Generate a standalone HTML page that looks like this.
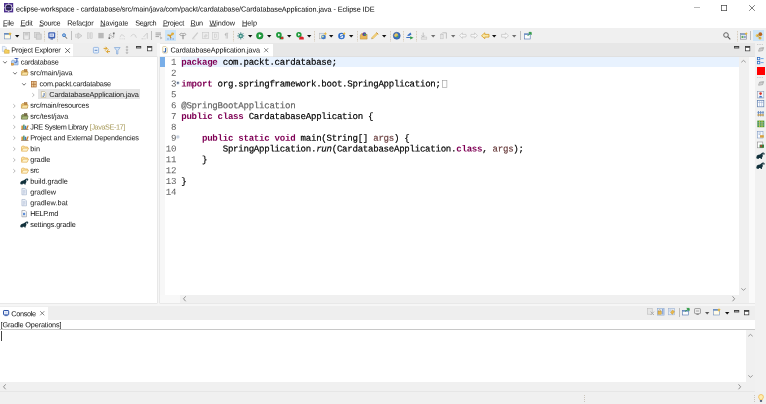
<!DOCTYPE html>
<html lang="en"><head><meta charset="utf-8"><title>eclipse-workspace - Eclipse IDE</title>
<style>html,body{margin:0;padding:0}body{width:766px;height:404px;position:relative;overflow:hidden;background:#fff;font-family:"Liberation Sans", sans-serif;-webkit-font-smoothing:antialiased}svg{overflow:visible}</style></head>
<body>
<div style="position:absolute;left:0px;top:0px;width:766px;height:28px;background:#fff;"></div>
<div style="position:absolute;left:0px;top:28px;width:766px;height:14.5px;background:#f0f0f0;"></div>
<div style="position:absolute;left:0px;top:42.5px;width:766px;height:362px;background:#f6f6f6;"></div>
<div style="position:absolute;left:0px;top:43px;width:156.5px;height:13.5px;background:#eeeeee;"></div>
<div style="position:absolute;left:0px;top:43.5px;width:72.5px;height:13.5px;background:#fff;"></div>
<div style="position:absolute;left:0px;top:56.5px;width:156.5px;height:246.5px;background:#fff;box-shadow:0 0 0 0.5px #d9d9d9"></div>
<div style="position:absolute;left:159.5px;top:43px;width:595.5px;height:13.5px;background:#e7e7e7;"></div>
<div style="position:absolute;left:159.5px;top:43.5px;width:113.5px;height:13.5px;background:#fff;"></div>
<div style="position:absolute;left:159.5px;top:56.5px;width:595.5px;height:246.5px;background:#fff;box-shadow:0 0 0 0.5px #d9d9d9"></div>
<div style="position:absolute;left:159.5px;top:56.5px;width:5.3px;height:238.5px;background:#f7f7f7;"></div>
<div style="position:absolute;left:181px;top:56.5px;width:557.5px;height:10.7px;background:#e8f2fe;"></div>
<div style="position:absolute;left:159.5px;top:56.5px;width:5.3px;height:10.7px;background:#78aee8;"></div>
<div style="position:absolute;left:738.5px;top:56.5px;width:10px;height:246.5px;background:#f0f0f0;"></div>
<div style="position:absolute;left:748.5px;top:56.5px;width:6.5px;height:246.5px;background:#fafafa;"></div>
<div style="position:absolute;left:179.7px;top:295px;width:559px;height:8px;background:#f0f0f0;"></div>
<div style="position:absolute;left:159.5px;top:295px;width:20.2px;height:8px;background:#f8f8f8;"></div>
<div style="position:absolute;left:755px;top:42.5px;width:11px;height:349px;background:#f1f1f1;"></div>
<div style="position:absolute;left:0px;top:305.7px;width:755px;height:0.7px;background:#e6e6e6;"></div>
<div style="position:absolute;left:0px;top:306.3px;width:755px;height:13.3px;background:#eeeeee;"></div>
<div style="position:absolute;left:0px;top:306.5px;width:48.3px;height:13.3px;background:#fff;"></div>
<div style="position:absolute;left:0px;top:319.6px;width:755px;height:71.4px;background:#fff;"></div>
<div style="position:absolute;left:0px;top:329px;width:755px;height:0.8px;background:#c8c8c8;"></div>
<div style="position:absolute;left:745.5px;top:329.5px;width:9.5px;height:52px;background:#f0f0f0;"></div>
<div style="position:absolute;left:0px;top:381.5px;width:755px;height:9.5px;background:#f0f0f0;"></div>
<div style="position:absolute;left:0px;top:391px;width:766px;height:13px;background:#f0f0f0;"></div>
<div style="position:absolute;left:0px;top:391px;width:755px;height:0.7px;background:#e6e6e6;"></div>
<svg style="position:absolute;left:3.9px;top:3.4px;" width="9.2" height="9.4" viewBox="0 0 9.2 9.4"><rect x="0" y="0" width="9.2" height="9.4" fill="#4b2e8c"/><rect x="-0.7" y="-4.2" width="1.4" height="1.2" fill="#ddd6ee" transform="translate(4.6,4.7) rotate(0)"/><rect x="-0.7" y="-4.2" width="1.4" height="1.2" fill="#ddd6ee" transform="translate(4.6,4.7) rotate(45)"/><rect x="-0.7" y="-4.2" width="1.4" height="1.2" fill="#ddd6ee" transform="translate(4.6,4.7) rotate(90)"/><rect x="-0.7" y="-4.2" width="1.4" height="1.2" fill="#ddd6ee" transform="translate(4.6,4.7) rotate(135)"/><rect x="-0.7" y="-4.2" width="1.4" height="1.2" fill="#ddd6ee" transform="translate(4.6,4.7) rotate(180)"/><rect x="-0.7" y="-4.2" width="1.4" height="1.2" fill="#ddd6ee" transform="translate(4.6,4.7) rotate(225)"/><rect x="-0.7" y="-4.2" width="1.4" height="1.2" fill="#ddd6ee" transform="translate(4.6,4.7) rotate(270)"/><rect x="-0.7" y="-4.2" width="1.4" height="1.2" fill="#ddd6ee" transform="translate(4.6,4.7) rotate(315)"/><circle cx="4.6" cy="4.7" r="3.5" fill="#e6e0f2"/><circle cx="4.6" cy="4.7" r="2.9" fill="#2b2250"/><rect x="2.6" y="4.3" width="4" height="0.8" fill="#6a58b0"/></svg>
<svg style="position:absolute;left:693.8px;top:7.4px;" width="6" height="1" viewBox="0 0 6 1"><rect width="6" height="0.7" fill="#9a9a9a"/></svg>
<svg style="position:absolute;left:721px;top:5.3px;" width="6" height="6" viewBox="0 0 6 6"><rect x="0.35" y="0.35" width="5.3" height="5.3" fill="none" stroke="#444" stroke-width="0.7"/></svg>
<svg style="position:absolute;left:749px;top:5.3px;" width="6" height="6" viewBox="0 0 6 6"><path d="M0.2 0.2L5.8 5.8M5.8 0.2L0.2 5.8" stroke="#444" stroke-width="0.7" fill="none"/></svg>
<svg style="position:absolute;left:4px;top:32.15px;" width="7.5" height="7.5" viewBox="0 0 7.5 7.5"><rect x="0.4" y="1.3" width="6" height="5.6" fill="#fffbe8" stroke="#6f8fc0" stroke-width="0.6"/><rect x="0.4" y="1.3" width="6" height="1.3" fill="#4a78b8"/><path d="M6 0l.6 1.2 1.2.3-1 .8.2 1.2L6 2.9l-1 .6.2-1.2-1-.8 1.2-.3z" fill="#e8b83a"/></svg>
<svg style="position:absolute;left:14.8px;top:35.0px;" width="4.4" height="2.4" viewBox="0 0 4.4 2.4"><path d="M0 0H4.4L2.2 2.4Z" fill="#111"/></svg>
<svg style="position:absolute;left:23px;top:32.15px;" width="7" height="7.5" viewBox="0 0 7 7.5"><rect x="0.4" y="0.4" width="6.2" height="6.7" fill="#dcdcdc" stroke="#bdbdbd" stroke-width="0.8"/><rect x="1.8" y="0.4" width="3.4" height="2.4" fill="#c9c9c9"/><rect x="1.6" y="4.2" width="3.8" height="2.9" fill="#ececec"/></svg>
<svg style="position:absolute;left:34px;top:32.15px;" width="7.5" height="7.5" viewBox="0 0 7.5 7.5"><rect x="0.4" y="0.4" width="5" height="5.2" fill="#dcdcdc" stroke="#c2c2c2" stroke-width="0.7"/><rect x="2.2" y="2" width="5" height="5.2" fill="#d6d6d6" stroke="#bdbdbd" stroke-width="0.7"/></svg>
<svg style="position:absolute;left:43.9px;top:30.5px;" width="1" height="10" viewBox="0 0 1 10"><rect x="0" y="0.0" width="0.8" height="0.8" fill="#c9b9a0"/><rect x="0" y="1.6" width="0.8" height="0.8" fill="#c9b9a0"/><rect x="0" y="3.2" width="0.8" height="0.8" fill="#c9b9a0"/><rect x="0" y="4.8" width="0.8" height="0.8" fill="#c9b9a0"/><rect x="0" y="6.4" width="0.8" height="0.8" fill="#c9b9a0"/><rect x="0" y="8.0" width="0.8" height="0.8" fill="#c9b9a0"/><rect x="0" y="9.6" width="0.8" height="0.8" fill="#c9b9a0"/></svg>
<svg style="position:absolute;left:48px;top:32.15px;" width="7.5" height="7.5" viewBox="0 0 7.5 7.5"><rect x="0.3" y="0.3" width="6.9" height="6.2" rx="1" fill="#3f62b4"/><rect x="1.5" y="1.5" width="4.5" height="3.3" fill="#e6ecfa"/><rect x="2.3" y="2.7" width="2.8" height="0.7" fill="#3f62b4"/><rect x="2.5" y="6.5" width="2.5" height="1" fill="#2c4a94"/></svg>
<svg style="position:absolute;left:57.300000000000004px;top:30.5px;" width="1" height="10" viewBox="0 0 1 10"><rect x="0" y="0.0" width="0.8" height="0.8" fill="#c9b9a0"/><rect x="0" y="1.6" width="0.8" height="0.8" fill="#c9b9a0"/><rect x="0" y="3.2" width="0.8" height="0.8" fill="#c9b9a0"/><rect x="0" y="4.8" width="0.8" height="0.8" fill="#c9b9a0"/><rect x="0" y="6.4" width="0.8" height="0.8" fill="#c9b9a0"/><rect x="0" y="8.0" width="0.8" height="0.8" fill="#c9b9a0"/><rect x="0" y="9.6" width="0.8" height="0.8" fill="#c9b9a0"/></svg>
<svg style="position:absolute;left:62px;top:32.15px;" width="5" height="7.5" viewBox="0 0 5 7.5"><circle cx="2" cy="3.2" r="1.5" fill="#9fc4ee" stroke="#2f6fbe" stroke-width="0.8"/><path d="M3.2 4.4L4.8 6.6" stroke="#4a4a4a" stroke-width="0.9"/></svg>
<div style="position:absolute;left:70.6px;top:31px;width:0.8px;height:9.3px;background:#bdbdbd;"></div>
<svg style="position:absolute;left:75px;top:32.15px;" width="7.5" height="7.5" viewBox="0 0 7.5 7.5"><path d="M0.5 2.2h2.3v3.1H0.5z" fill="#e4e4e4" stroke="#c0c0c0" stroke-width="0.5"/><path d="M3 0.9L7 3.75L3 6.6z" fill="#dedede" stroke="#b9b9b9" stroke-width="0.6"/></svg>
<svg style="position:absolute;left:87px;top:32.15px;" width="5.5" height="7.5" viewBox="0 0 5.5 7.5"><rect x="0.3" y="0.8" width="1.9" height="5.9" fill="#e2e2e2" stroke="#c6c6c6" stroke-width="0.5"/><rect x="3.3" y="0.8" width="1.9" height="5.9" fill="#e2e2e2" stroke="#c6c6c6" stroke-width="0.5"/></svg>
<svg style="position:absolute;left:98px;top:32.15px;" width="6" height="7.5" viewBox="0 0 6 7.5"><rect x="0.3" y="0.9" width="5.4" height="5.4" fill="#b9b9b9"/></svg>
<svg style="position:absolute;left:108px;top:32.15px;" width="7" height="7.5" viewBox="0 0 7 7.5"><path d="M1.3 6V2.4L5.7 5.4V1.6" stroke="#8d8d8d" stroke-width="0.6" fill="none"/><rect x="4.9" y="0.5" width="1.7" height="1.7" fill="#6f6f6f"/><rect x="0.5" y="5.3" width="1.7" height="1.7" fill="#6f6f6f"/><path d="M2.4 1.2l1 1M4.4 6.4l-1-1" stroke="#8d8d8d" stroke-width="0.5"/></svg>
<svg style="position:absolute;left:119px;top:32.15px;" width="7" height="7.5" viewBox="0 0 7 7.5"><path d="M1 5.2Q2.2 1.2 4.2 3.2L5.6 5" stroke="#cdcdcd" stroke-width="0.8" fill="none"/><path d="M0.6 6.8h1M2.6 6.8h1M4.6 6.8h1.4" stroke="#cfcfcf" stroke-width="0.8"/></svg>
<svg style="position:absolute;left:130px;top:32.15px;" width="7" height="7.5" viewBox="0 0 7 7.5"><path d="M0.8 4.5Q3.5 0.2 6.2 4.5" stroke="#cfcfcf" stroke-width="0.9" fill="none"/><path d="M5 4.2l1.6 1.6" stroke="#cfcfcf" stroke-width="0.9"/></svg>
<svg style="position:absolute;left:141px;top:32.15px;" width="7" height="7.5" viewBox="0 0 7 7.5"><path d="M0.5 6.8h2M3.5 6.8h1M2.5 5L6 1.2M6.3 1v5.8" stroke="#c9c9c9" stroke-width="0.9" fill="none"/></svg>
<div style="position:absolute;left:150.9px;top:31px;width:0.8px;height:9.3px;background:#bdbdbd;"></div>
<svg style="position:absolute;left:155px;top:32.15px;" width="7.5" height="7.5" viewBox="0 0 7.5 7.5"><path d="M0.5 1h5.5M0.5 2.8h5.5M0.5 4.6h3.5" stroke="#8e8e8e" stroke-width="0.8"/><path d="M5.2 4.6l2 1.4-1.6 1z" fill="#cfcfcf" stroke="#9a9a9a" stroke-width="0.4"/></svg>
<div style="position:absolute;left:164.5px;top:30.3px;width:11.2px;height:10.6px;background:#cce4f7;"></div>
<svg style="position:absolute;left:166.5px;top:32.15px;" width="7.5" height="7.5" viewBox="0 0 7.5 7.5"><path d="M0.5 3l3 .6 3.2-2.4" stroke="#d9a12c" stroke-width="1.3" fill="none"/><circle cx="5.4" cy="1.9" r="1.3" fill="#e4ae3c"/><path d="M2.8 3.6l1.2 2.6" stroke="#c58a20" stroke-width="1.1"/><path d="M0.3 7h1.4M2.9 7h1.4M5.5 7h1.4" stroke="#4e79c2" stroke-width="0.8"/></svg>
<svg style="position:absolute;left:179px;top:32.15px;" width="7.5" height="7.5" viewBox="0 0 7.5 7.5"><path d="M0.5 2.5Q2 0.3 4 1.8Q6 0.2 7 2.5Q5.5 4.2 4 3.2Q2 4.5 0.5 2.5z" fill="#efefef" stroke="#8a8a8a" stroke-width="0.7"/><path d="M4 3.2V7.2" stroke="#777" stroke-width="0.9"/></svg>
<svg style="position:absolute;left:192px;top:32.15px;" width="6.5" height="7.5" viewBox="0 0 6.5 7.5"><path d="M0.5 6.8L5.8 0.6" stroke="#c9c9c9" stroke-width="1.2"/><path d="M0.3 7h3" stroke="#d4d4d4" stroke-width="0.6"/></svg>
<svg style="position:absolute;left:201.5px;top:32.15px;" width="7.0" height="7.5" viewBox="0 0 7.0 7.5"><rect x="0.3" y="0.6" width="6.4" height="6" fill="#ececec" stroke="#c9c9c9" stroke-width="0.6"/><path d="M2 4.5l2-2.2 1.2 1.2-2 2z" fill="#d8d8d8" stroke="#c4c4c4" stroke-width="0.4"/></svg>
<svg style="position:absolute;left:212px;top:32.15px;" width="6.5" height="7.5" viewBox="0 0 6.5 7.5"><rect x="0.3" y="0.3" width="5.9" height="6.9" fill="#efefef" stroke="#c6c6c6" stroke-width="0.6"/><rect x="2.3" y="2" width="1.9" height="3.6" fill="none" stroke="#c2c2c2" stroke-width="0.5"/></svg>
<svg style="position:absolute;left:224px;top:32.15px;" width="4.5" height="7.5" viewBox="0 0 4.5 7.5"><path d="M2.2 1.2V6.6M3.5 1.2V6.6M2.2 1.2H4.2" stroke="#b2b2b2" stroke-width="0.55" fill="none"/><path d="M2.2 1.2Q0.8 1.2 0.8 2.5Q0.8 3.7 2.2 3.7z" fill="#b8b8b8"/></svg>
<svg style="position:absolute;left:232.6px;top:30.5px;" width="1" height="10" viewBox="0 0 1 10"><rect x="0" y="0.0" width="0.8" height="0.8" fill="#c9b9a0"/><rect x="0" y="1.6" width="0.8" height="0.8" fill="#c9b9a0"/><rect x="0" y="3.2" width="0.8" height="0.8" fill="#c9b9a0"/><rect x="0" y="4.8" width="0.8" height="0.8" fill="#c9b9a0"/><rect x="0" y="6.4" width="0.8" height="0.8" fill="#c9b9a0"/><rect x="0" y="8.0" width="0.8" height="0.8" fill="#c9b9a0"/><rect x="0" y="9.6" width="0.8" height="0.8" fill="#c9b9a0"/></svg>
<svg style="position:absolute;left:237px;top:32.15px;" width="7.5" height="7.5" viewBox="0 0 7.5 7.5"><circle cx="3.75" cy="3.9" r="2.3" fill="#3f8f86"/><circle cx="3.75" cy="3.9" r="1" fill="#bfe3d9"/><path d="M3.75 0.4v1.2M3.75 6.2v1.2M0.3 3.9h1.2M6 3.9h1.2M1.3 1.4l.9.9M5.3 5.4l.9.9M6.2 1.4l-.9.9M2.2 5.4l-.9.9" stroke="#2f6f77" stroke-width="0.9"/></svg>
<svg style="position:absolute;left:248.10000000000002px;top:35.0px;" width="4.4" height="2.4" viewBox="0 0 4.4 2.4"><path d="M0 0H4.4L2.2 2.4Z" fill="#111"/></svg>
<svg style="position:absolute;left:256px;top:32.15px;" width="7.5" height="7.5" viewBox="0 0 7.5 7.5"><circle cx="3.75" cy="3.75" r="3.35" fill="#1f9a3c"/><circle cx="3.75" cy="3.75" r="3.35" fill="none" stroke="#127a2c" stroke-width="0.5"/><path d="M2.8 2L5.6 3.75L2.8 5.5z" fill="#fff"/></svg>
<svg style="position:absolute;left:267.40000000000003px;top:35.0px;" width="4.4" height="2.4" viewBox="0 0 4.4 2.4"><path d="M0 0H4.4L2.2 2.4Z" fill="#111"/></svg>
<svg style="position:absolute;left:276px;top:32.15px;" width="7.5" height="7.5" viewBox="0 0 7.5 7.5"><circle cx="2.9" cy="2.9" r="2.8" fill="#1f9a3c"/><path d="M2.1 1.5L4.4 2.9L2.1 4.3z" fill="#fff"/><rect x="3.6" y="4.6" width="3.7" height="2.7" fill="#2a7a2a"/><rect x="5" y="5.2" width="2.3" height="1.8" fill="#d42a2a"/></svg>
<svg style="position:absolute;left:287.40000000000003px;top:35.0px;" width="4.4" height="2.4" viewBox="0 0 4.4 2.4"><path d="M0 0H4.4L2.2 2.4Z" fill="#111"/></svg>
<svg style="position:absolute;left:296px;top:32.15px;" width="8" height="7.5" viewBox="0 0 8 7.5"><circle cx="2.9" cy="2.7" r="2.7" fill="#1f9a3c"/><path d="M2.1 1.3L4.4 2.7L2.1 4.1z" fill="#fff"/><path d="M3.2 5.6Q5.5 3.2 7.8 5.6V7.4H3.2z" fill="#d8262c"/></svg>
<svg style="position:absolute;left:307.40000000000003px;top:35.0px;" width="4.4" height="2.4" viewBox="0 0 4.4 2.4"><path d="M0 0H4.4L2.2 2.4Z" fill="#111"/></svg>
<svg style="position:absolute;left:314.20000000000005px;top:30.5px;" width="1" height="10" viewBox="0 0 1 10"><rect x="0" y="0.0" width="0.8" height="0.8" fill="#c9b9a0"/><rect x="0" y="1.6" width="0.8" height="0.8" fill="#c9b9a0"/><rect x="0" y="3.2" width="0.8" height="0.8" fill="#c9b9a0"/><rect x="0" y="4.8" width="0.8" height="0.8" fill="#c9b9a0"/><rect x="0" y="6.4" width="0.8" height="0.8" fill="#c9b9a0"/><rect x="0" y="8.0" width="0.8" height="0.8" fill="#c9b9a0"/><rect x="0" y="9.6" width="0.8" height="0.8" fill="#c9b9a0"/></svg>
<svg style="position:absolute;left:318.5px;top:32.15px;" width="8.0" height="7.5" viewBox="0 0 8.0 7.5"><rect x="0.3" y="1.2" width="6.2" height="5.6" fill="#f6f2e4" stroke="#a9a9a9" stroke-width="0.5"/><rect x="0.3" y="1.2" width="6.2" height="1" fill="#b9c6dc"/><circle cx="4.4" cy="5" r="2.3" fill="#3d78c8"/><circle cx="3.8" cy="4.5" r="1.1" fill="#d8e6a0"/><path d="M6.4 0l.5 1 1 .2-.8.7.2 1-0.9-.5-.9.5.2-1-.8-.7 1-.2z" fill="#e8b83a"/></svg>
<svg style="position:absolute;left:329.40000000000003px;top:35.0px;" width="4.4" height="2.4" viewBox="0 0 4.4 2.4"><path d="M0 0H4.4L2.2 2.4Z" fill="#111"/></svg>
<svg style="position:absolute;left:338px;top:32.15px;" width="7.5" height="7.5" viewBox="0 0 7.5 7.5"><circle cx="3.5" cy="4" r="3.3" fill="#2e6cc6"/><path d="M4.8 2.5H2.6V4H4.6V5.6H2.4" stroke="#fff" stroke-width="0.9" fill="none"/><path d="M6.2 0l.5 1 1 .2-.8.7.2 1-0.9-.5-.9.5.2-1-.8-.7 1-.2z" fill="#e8b83a"/></svg>
<svg style="position:absolute;left:349.40000000000003px;top:35.0px;" width="4.4" height="2.4" viewBox="0 0 4.4 2.4"><path d="M0 0H4.4L2.2 2.4Z" fill="#111"/></svg>
<svg style="position:absolute;left:356.6px;top:30.5px;" width="1" height="10" viewBox="0 0 1 10"><rect x="0" y="0.0" width="0.8" height="0.8" fill="#c9b9a0"/><rect x="0" y="1.6" width="0.8" height="0.8" fill="#c9b9a0"/><rect x="0" y="3.2" width="0.8" height="0.8" fill="#c9b9a0"/><rect x="0" y="4.8" width="0.8" height="0.8" fill="#c9b9a0"/><rect x="0" y="6.4" width="0.8" height="0.8" fill="#c9b9a0"/><rect x="0" y="8.0" width="0.8" height="0.8" fill="#c9b9a0"/><rect x="0" y="9.6" width="0.8" height="0.8" fill="#c9b9a0"/></svg>
<svg style="position:absolute;left:360px;top:32.15px;" width="7.5" height="7.5" viewBox="0 0 7.5 7.5"><path d="M0.3 3.2L1.5 1.6h2.2l.8.9h2.6v4.6H0.3z" fill="#e9b85a" stroke="#b98a2e" stroke-width="0.5"/><circle cx="4.4" cy="2.2" r="1.9" fill="#5b3f9e"/><circle cx="5" cy="2.6" r="1" fill="#3fae5a"/></svg>
<svg style="position:absolute;left:371px;top:32.15px;" width="8" height="7.5" viewBox="0 0 8 7.5"><path d="M1 6.6L6.3 1.2" stroke="#e6b84e" stroke-width="2.2"/><path d="M1 6.6L6.3 1.2" stroke="#fbeebb" stroke-width="0.8"/><path d="M5.4 0.5L7.3 2.3" stroke="#c0862e" stroke-width="0.9"/><path d="M0.4 7.2l1.2-.4-.8-.8z" fill="#6a5a4a"/></svg>
<svg style="position:absolute;left:382.2px;top:35.0px;" width="4.4" height="2.4" viewBox="0 0 4.4 2.4"><path d="M0 0H4.4L2.2 2.4Z" fill="#111"/></svg>
<svg style="position:absolute;left:389.8px;top:30.5px;" width="1" height="10" viewBox="0 0 1 10"><rect x="0" y="0.0" width="0.8" height="0.8" fill="#c9b9a0"/><rect x="0" y="1.6" width="0.8" height="0.8" fill="#c9b9a0"/><rect x="0" y="3.2" width="0.8" height="0.8" fill="#c9b9a0"/><rect x="0" y="4.8" width="0.8" height="0.8" fill="#c9b9a0"/><rect x="0" y="6.4" width="0.8" height="0.8" fill="#c9b9a0"/><rect x="0" y="8.0" width="0.8" height="0.8" fill="#c9b9a0"/><rect x="0" y="9.6" width="0.8" height="0.8" fill="#c9b9a0"/></svg>
<svg style="position:absolute;left:393px;top:32.15px;" width="7.5" height="7.5" viewBox="0 0 7.5 7.5"><circle cx="3.75" cy="3.75" r="3.5" fill="#3a6fbe"/><circle cx="3.2" cy="3.2" r="1.9" fill="#e9c45a"/><circle cx="4.4" cy="4.4" r="1" fill="#4aa85a"/><circle cx="3.75" cy="3.75" r="3.5" fill="none" stroke="#2a4f8e" stroke-width="0.5"/></svg>
<svg style="position:absolute;left:403.20000000000005px;top:30.5px;" width="1" height="10" viewBox="0 0 1 10"><rect x="0" y="0.0" width="0.8" height="0.8" fill="#c9b9a0"/><rect x="0" y="1.6" width="0.8" height="0.8" fill="#c9b9a0"/><rect x="0" y="3.2" width="0.8" height="0.8" fill="#c9b9a0"/><rect x="0" y="4.8" width="0.8" height="0.8" fill="#c9b9a0"/><rect x="0" y="6.4" width="0.8" height="0.8" fill="#c9b9a0"/><rect x="0" y="8.0" width="0.8" height="0.8" fill="#c9b9a0"/><rect x="0" y="9.6" width="0.8" height="0.8" fill="#c9b9a0"/></svg>
<svg style="position:absolute;left:406px;top:32.15px;" width="8" height="7.5" viewBox="0 0 8 7.5"><path d="M1 3.5L4.5 0.5L5.5 2.5L3 4z" fill="#3b6fc2"/><path d="M0.3 5.5h5" stroke="#3b6fc2" stroke-width="1"/><path d="M4.2 4.3L7.6 5.8L4.2 7.4z" fill="#2f9a45"/></svg>
<svg style="position:absolute;left:416.3px;top:30.5px;" width="1" height="10" viewBox="0 0 1 10"><rect x="0" y="0.0" width="0.8" height="0.8" fill="#c9b9a0"/><rect x="0" y="1.6" width="0.8" height="0.8" fill="#c9b9a0"/><rect x="0" y="3.2" width="0.8" height="0.8" fill="#c9b9a0"/><rect x="0" y="4.8" width="0.8" height="0.8" fill="#c9b9a0"/><rect x="0" y="6.4" width="0.8" height="0.8" fill="#c9b9a0"/><rect x="0" y="8.0" width="0.8" height="0.8" fill="#c9b9a0"/><rect x="0" y="9.6" width="0.8" height="0.8" fill="#c9b9a0"/></svg>
<svg style="position:absolute;left:420px;top:32.15px;" width="7.5" height="7.5" viewBox="0 0 7.5 7.5"><path d="M3.2 0.6v4.5M1.6 3.4l1.6 1.8 1.6-1.8" stroke="#b5b5b5" stroke-width="0.8" fill="none"/><rect x="1.2" y="5" width="5.6" height="2.2" fill="#e4e4e4" stroke="#c4c4c4" stroke-width="0.5"/></svg>
<svg style="position:absolute;left:430.8px;top:35.0px;" width="4.4" height="2.4" viewBox="0 0 4.4 2.4"><path d="M0 0H4.4L2.2 2.4Z" fill="#6f6f6f"/></svg>
<svg style="position:absolute;left:440px;top:32.15px;" width="7.5" height="7.5" viewBox="0 0 7.5 7.5"><path d="M2.4 6.6V2l-1.6 0M2.4 0.8h4v5.8" stroke="#b5b5b5" stroke-width="0.8" fill="none"/><rect x="0.6" y="2.6" width="2.6" height="4.2" fill="#e4e4e4" stroke="#c4c4c4" stroke-width="0.5"/></svg>
<svg style="position:absolute;left:450.8px;top:35.0px;" width="4.4" height="2.4" viewBox="0 0 4.4 2.4"><path d="M0 0H4.4L2.2 2.4Z" fill="#6f6f6f"/></svg>
<svg style="position:absolute;left:459px;top:32.15px;" width="8" height="7.5" viewBox="0 0 8 7.5"><path d="M0.5 3.6L3.4 0.9V2.4H6.9Q7.5 3.6 6.9 4.9H3.4V6.4z" fill="#f7f7f7" stroke="#b9b9b9" stroke-width="0.6"/></svg>
<svg style="position:absolute;left:470px;top:32.15px;" width="8" height="7.5" viewBox="0 0 8 7.5"><path d="M7.5 3.6L4.6 0.9V2.4H1.1Q0.5 3.6 1.1 4.9H4.6V6.4z" fill="#f7f7f7" stroke="#b9b9b9" stroke-width="0.6"/></svg>
<svg style="position:absolute;left:481px;top:32.15px;" width="8.5" height="7.5" viewBox="0 0 8.5 7.5"><path d="M0.5 3.75L3.8 0.8V2.4H8V5.1H3.8V6.7z" fill="#f9e9a8" stroke="#d79a1e" stroke-width="0.8"/></svg>
<svg style="position:absolute;left:492.3px;top:35.0px;" width="4.4" height="2.4" viewBox="0 0 4.4 2.4"><path d="M0 0H4.4L2.2 2.4Z" fill="#111"/></svg>
<svg style="position:absolute;left:501px;top:32.15px;" width="8" height="7.5" viewBox="0 0 8 7.5"><path d="M7.5 3.75L4.4 0.9V2.4H0.6V5.1H4.4V6.6z" fill="#f7f7f7" stroke="#b9b9b9" stroke-width="0.6"/></svg>
<svg style="position:absolute;left:511.8px;top:35.0px;" width="4.4" height="2.4" viewBox="0 0 4.4 2.4"><path d="M0 0H4.4L2.2 2.4Z" fill="#6f6f6f"/></svg>
<div style="position:absolute;left:519.6px;top:31px;width:0.8px;height:9.3px;background:#bdbdbd;"></div>
<svg style="position:absolute;left:524px;top:32.15px;" width="8" height="7.5" viewBox="0 0 8 7.5"><rect x="0.4" y="1.8" width="5.8" height="5.2" fill="#fdfdfd" stroke="#4f74ae" stroke-width="0.6"/><rect x="0.4" y="1.8" width="5.8" height="1" fill="#5a82be"/><path d="M3.6 4L6.6 0.8M5 0.4h2.2v2.2z" stroke="#2f9a45" stroke-width="0.9" fill="#2f9a45"/></svg>
<svg style="position:absolute;left:722.5px;top:31.9px;" width="8.0" height="8" viewBox="0 0 8.0 8"><circle cx="3" cy="3" r="2.3" fill="none" stroke="#555" stroke-width="0.9"/><path d="M4.7 4.7L7.3 7.3" stroke="#555" stroke-width="1.1"/></svg>
<svg style="position:absolute;left:736.8000000000001px;top:30.5px;" width="1" height="10" viewBox="0 0 1 10"><rect x="0" y="0.0" width="0.8" height="0.8" fill="#c9b9a0"/><rect x="0" y="1.6" width="0.8" height="0.8" fill="#c9b9a0"/><rect x="0" y="3.2" width="0.8" height="0.8" fill="#c9b9a0"/><rect x="0" y="4.8" width="0.8" height="0.8" fill="#c9b9a0"/><rect x="0" y="6.4" width="0.8" height="0.8" fill="#c9b9a0"/><rect x="0" y="8.0" width="0.8" height="0.8" fill="#c9b9a0"/><rect x="0" y="9.6" width="0.8" height="0.8" fill="#c9b9a0"/></svg>
<svg style="position:absolute;left:740px;top:32.15px;" width="8" height="7.5" viewBox="0 0 8 7.5"><rect x="0.4" y="1.6" width="6.2" height="5.6" fill="#f3f3f3" stroke="#8a8f98" stroke-width="0.7"/><rect x="0.4" y="1.6" width="6.2" height="1.3" fill="#7e9cc8"/><rect x="1.5" y="3.8" width="2" height="2.2" fill="#5fa863"/><rect x="4" y="3.8" width="1.8" height="2.2" fill="#8aa4cf"/><path d="M6.2 0l.5 1 1 .2-.8.7.2 1-0.9-.5-.9.5.2-1-.8-.7 1-.2z" fill="#e8b83a"/></svg>
<div style="position:absolute;left:750.3000000000001px;top:31px;width:0.8px;height:9.3px;background:#bdbdbd;"></div>
<div style="position:absolute;left:753px;top:30.3px;width:11.2px;height:10.6px;background:#cce4f7;"></div>
<svg style="position:absolute;left:755px;top:32.15px;" width="8" height="7.5" viewBox="0 0 8 7.5"><circle cx="5.3" cy="2.2" r="1.9" fill="#b8651f"/><circle cx="2.2" cy="3.6" r="1.6" fill="#e9c45a"/><circle cx="5" cy="6" r="1.5" fill="#e3b23c"/><path d="M2.2 3.6L5.3 2.2M2.2 3.6L5 6" stroke="#9a7a3a" stroke-width="0.5"/></svg>
<svg style="position:absolute;left:1.8px;top:45.6px;" width="8" height="8" viewBox="0 0 8 8"><path d="M0.4 0.4h2.6l1.2 1.2v3.8H0.4z" fill="#edf3fb" stroke="#9db3d3" stroke-width="0.5"/><path d="M2.4 4.3L3 3.4h1.5l.5.7h2.2v3.2H2.4z" fill="#f4cf5e" stroke="#c99a30" stroke-width="0.5"/></svg>
<svg style="position:absolute;left:64.6px;top:48.1px;" width="5.2" height="5.2" viewBox="0 0 5.2 5.2"><path d="M0.2 0.2L5.0 5.0M5.0 0.2L0.2 5.0" stroke="#333" stroke-width="0.7" fill="none"/></svg>
<svg style="position:absolute;left:92.6px;top:46.6px;" width="6" height="6.6" viewBox="0 0 6 6.6"><rect x="0.4" y="0.4" width="5.2" height="5.6" rx="0.8" fill="#e6f0fc" stroke="#7aa5dc" stroke-width="0.7"/><path d="M1.6 3.3h2.8" stroke="#3d6cb0" stroke-width="0.8"/></svg>
<svg style="position:absolute;left:102.5px;top:46px;" width="7.5" height="8" viewBox="0 0 7.5 8"><path d="M0.6 2.4h3.4l-1.4-1.6M4 2.4L2.6 3.9" stroke="#dba12c" stroke-width="1" fill="none"/><path d="M7 5.6H3.6l1.4 1.6M3.6 5.6L5 4.1" stroke="#dba12c" stroke-width="1" fill="none"/><path d="M4 2.4L6 4M3.6 5.6L1.6 4" stroke="#e8bd5a" stroke-width="0.8" fill="none"/></svg>
<svg style="position:absolute;left:113.5px;top:46.5px;" width="6.5" height="7.5" viewBox="0 0 6.5 7.5"><path d="M0.4 0.5h5.7L3.9 3.6V7H2.6V3.6z" fill="#d7e6f7" stroke="#6f9bd1" stroke-width="0.6"/></svg>
<svg style="position:absolute;left:126.3px;top:46.3px;" width="2" height="8" viewBox="0 0 2 8"><circle cx="1" cy="1.1" r="0.8" fill="none" stroke="#8a8a8a" stroke-width="0.5"/><circle cx="1" cy="3.9" r="0.8" fill="none" stroke="#8a8a8a" stroke-width="0.5"/><circle cx="1" cy="6.7" r="0.8" fill="none" stroke="#8a8a8a" stroke-width="0.5"/></svg>
<svg style="position:absolute;left:136px;top:45.9px;" width="5.2" height="2.4" viewBox="0 0 5.2 2.4"><rect x="0.35" y="0.35" width="4.5" height="1.7" fill="#ddd" stroke="#333" stroke-width="0.7"/><rect x="0.35" y="0.35" width="4.5" height="0.9" fill="#333"/></svg>
<svg style="position:absolute;left:146.9px;top:45.8px;" width="5.2" height="5.2" viewBox="0 0 5.2 5.2"><rect x="0.35" y="0.35" width="4.5" height="4.5" fill="#fff" stroke="#333" stroke-width="0.7"/><rect x="0.35" y="0.35" width="4.5" height="1.4" fill="#333"/></svg>
<svg style="position:absolute;left:3.0px;top:61.3px;" width="4" height="2.6" viewBox="0 0 4 2.6"><path d="M0.2 0.3L2 2.2L3.8 0.3" stroke="#404040" stroke-width="0.75" fill="none"/></svg>
<svg style="position:absolute;left:11.0px;top:58.199999999999996px;" width="8" height="7.3" viewBox="0 0 8 7.3"><path d="M0.5 3.1L1.3 2.2h1.8l.6.7h3.4v4H0.5z" fill="#b9d3f2" stroke="#5f86c0" stroke-width="0.5"/><path d="M3.6 0.5h2.3v2.7Q5.9 4.6 4.6 4.6Q3.8 4.6 3.4 4" stroke="#3558b0" stroke-width="0.95" fill="none"/><path d="M5.2 0.5h2.2" stroke="#3558b0" stroke-width="0.7"/><rect x="0.3" y="5.3" width="2.4" height="1.9" fill="#eaa43a" stroke="#b9761e" stroke-width="0.3"/></svg>
<svg style="position:absolute;left:12.5px;top:72.13px;" width="4" height="2.6" viewBox="0 0 4 2.6"><path d="M0.2 0.3L2 2.2L3.8 0.3" stroke="#404040" stroke-width="0.75" fill="none"/></svg>
<svg style="position:absolute;left:20.5px;top:69.43px;" width="8" height="7.3" viewBox="0 0 8 7.3"><path d="M0.4 2.6L1.3 1.5h2l.6.7h2.6v3.9H0.4z" fill="#e9c06a" stroke="#b98a36" stroke-width="0.5"/><path d="M1.5 3.2h5.7L6.3 6.1H0.4z" fill="#f8e3a6" stroke="#b98a36" stroke-width="0.45"/><rect x="3.4" y="0.5" width="2.6" height="1.8" fill="#c28a45" stroke="#8f5a22" stroke-width="0.4"/></svg>
<svg style="position:absolute;left:22.0px;top:82.96px;" width="4" height="2.6" viewBox="0 0 4 2.6"><path d="M0.2 0.3L2 2.2L3.8 0.3" stroke="#404040" stroke-width="0.75" fill="none"/></svg>
<svg style="position:absolute;left:30.6px;top:80.66px;" width="8" height="7.3" viewBox="0 0 8 7.3"><rect x="0.4" y="0.6" width="4.8" height="5.4" fill="#efcf9e" stroke="#a8662a" stroke-width="0.7"/><path d="M2.8 0.6v5.4M0.4 3.3h4.8" stroke="#a8662a" stroke-width="0.7"/></svg>
<svg style="position:absolute;left:32.3px;top:92.88999999999999px;" width="2.6" height="4" viewBox="0 0 2.6 4"><path d="M0.3 0.2L2.2 2L0.3 3.8" stroke="#9a9a9a" stroke-width="0.7" fill="none"/></svg>
<div style="position:absolute;left:38.3px;top:89.19px;width:101.5px;height:9.9px;background:#e4e4e4;"></div>
<svg style="position:absolute;left:40.7px;top:90.69px;" width="8" height="7.3" viewBox="0 0 8 7.3"><path d="M0.4 0.5h3.1l1.3 1.3v4.6H0.4z" fill="#fffdf0" stroke="#b5a57a" stroke-width="0.55"/><path d="M3.1 2v2.5Q3.1 5.4 2.2 5.4Q1.6 5.4 1.4 4.9" stroke="#2c55a8" stroke-width="0.85" fill="none"/></svg>
<svg style="position:absolute;left:13.3px;top:103.72px;" width="2.6" height="4" viewBox="0 0 2.6 4"><path d="M0.3 0.2L2.2 2L0.3 3.8" stroke="#9a9a9a" stroke-width="0.7" fill="none"/></svg>
<svg style="position:absolute;left:20.5px;top:101.92000000000002px;" width="8" height="7.3" viewBox="0 0 8 7.3"><path d="M0.4 2.6L1.3 1.5h2l.6.7h2.6v3.9H0.4z" fill="#e9c06a" stroke="#b98a36" stroke-width="0.5"/><path d="M1.5 3.2h5.7L6.3 6.1H0.4z" fill="#f8e3a6" stroke="#b98a36" stroke-width="0.45"/><rect x="3.4" y="0.5" width="2.6" height="1.8" fill="#c28a45" stroke="#8f5a22" stroke-width="0.4"/></svg>
<svg style="position:absolute;left:13.3px;top:114.54999999999998px;" width="2.6" height="4" viewBox="0 0 2.6 4"><path d="M0.3 0.2L2.2 2L0.3 3.8" stroke="#9a9a9a" stroke-width="0.7" fill="none"/></svg>
<svg style="position:absolute;left:20.5px;top:112.75px;" width="8" height="7.3" viewBox="0 0 8 7.3"><path d="M0.4 2.6L1.3 1.5h2l.6.7h2.6v3.9H0.4z" fill="#8a9a5a" stroke="#5f6a3a" stroke-width="0.5"/><path d="M1.5 3.2h5.7L6.3 6.1H0.4z" fill="#a9b87a" stroke="#5f6a3a" stroke-width="0.45"/><rect x="3.4" y="0.5" width="2.6" height="1.8" fill="#7a6a45" stroke="#5a4a2a" stroke-width="0.4"/></svg>
<svg style="position:absolute;left:13.3px;top:125.38px;" width="2.6" height="4" viewBox="0 0 2.6 4"><path d="M0.3 0.2L2.2 2L0.3 3.8" stroke="#9a9a9a" stroke-width="0.7" fill="none"/></svg>
<svg style="position:absolute;left:20.5px;top:123.18px;" width="8" height="7.3" viewBox="0 0 8 7.3"><rect x="0.4" y="2.6" width="1.5" height="3.6" fill="#d08a2e"/><rect x="2.1" y="1.6" width="1.5" height="4.6" fill="#4f8f6a"/><rect x="3.8" y="2.8" width="1.5" height="3.4" fill="#3f78b8"/><path d="M5.6 6.2l1.5-3.8" stroke="#c07a2a" stroke-width="1.2"/><rect x="0.1" y="6.1" width="7.4" height="0.7" fill="#8a6a4a"/></svg>
<svg style="position:absolute;left:13.3px;top:136.21px;" width="2.6" height="4" viewBox="0 0 2.6 4"><path d="M0.3 0.2L2.2 2L0.3 3.8" stroke="#9a9a9a" stroke-width="0.7" fill="none"/></svg>
<svg style="position:absolute;left:20.5px;top:134.01000000000002px;" width="8" height="7.3" viewBox="0 0 8 7.3"><rect x="0.4" y="2.6" width="1.5" height="3.6" fill="#d08a2e"/><rect x="2.1" y="1.6" width="1.5" height="4.6" fill="#4f8f6a"/><rect x="3.8" y="2.8" width="1.5" height="3.4" fill="#3f78b8"/><path d="M5.6 6.2l1.5-3.8" stroke="#c07a2a" stroke-width="1.2"/><rect x="0.1" y="6.1" width="7.4" height="0.7" fill="#8a6a4a"/></svg>
<svg style="position:absolute;left:13.3px;top:147.04px;" width="2.6" height="4" viewBox="0 0 2.6 4"><path d="M0.3 0.2L2.2 2L0.3 3.8" stroke="#9a9a9a" stroke-width="0.7" fill="none"/></svg>
<svg style="position:absolute;left:20.5px;top:144.84px;" width="8" height="7.3" viewBox="0 0 8 7.3"><path d="M0.5 5.6V1.9L1.2 1.1h1.9l.7.8h2.6v1.2" fill="#fbe9b0" stroke="#dfa23a" stroke-width="0.6"/><path d="M0.5 6.2L2 3.1h5.6L6.1 6.2z" fill="#fdf3d0" stroke="#dfa23a" stroke-width="0.6"/></svg>
<svg style="position:absolute;left:13.3px;top:157.86999999999998px;" width="2.6" height="4" viewBox="0 0 2.6 4"><path d="M0.3 0.2L2.2 2L0.3 3.8" stroke="#9a9a9a" stroke-width="0.7" fill="none"/></svg>
<svg style="position:absolute;left:20.5px;top:155.67px;" width="8" height="7.3" viewBox="0 0 8 7.3"><path d="M0.5 5.6V1.9L1.2 1.1h1.9l.7.8h2.6v1.2" fill="#fbe9b0" stroke="#dfa23a" stroke-width="0.6"/><path d="M0.5 6.2L2 3.1h5.6L6.1 6.2z" fill="#fdf3d0" stroke="#dfa23a" stroke-width="0.6"/></svg>
<svg style="position:absolute;left:13.3px;top:168.7px;" width="2.6" height="4" viewBox="0 0 2.6 4"><path d="M0.3 0.2L2.2 2L0.3 3.8" stroke="#9a9a9a" stroke-width="0.7" fill="none"/></svg>
<svg style="position:absolute;left:20.5px;top:166.5px;" width="8" height="7.3" viewBox="0 0 8 7.3"><path d="M0.5 5.6V1.9L1.2 1.1h1.9l.7.8h2.6v1.2" fill="#fbe9b0" stroke="#dfa23a" stroke-width="0.6"/><path d="M0.5 6.2L2 3.1h5.6L6.1 6.2z" fill="#fdf3d0" stroke="#dfa23a" stroke-width="0.6"/></svg>
<svg style="position:absolute;left:19.9px;top:177.83px;" width="8" height="7.3" viewBox="0 0 8 7.3"><path d="M0.4 6.2Q-0.2 3.2 2.4 2.7Q4 2.5 5 1.4Q6.2 0.1 7.6 0.6Q8.6 1.1 8.2 2.1Q7.8 2.9 6.9 2.5Q7.6 1.7 7 1.4Q6.4 1.4 6.3 2.3Q6.9 4.2 5.6 5.6L5.7 6.6H4.5L4.3 5.7Q3.4 5.9 2.7 5.7L2.6 6.6H1.3L1.2 5.9z" fill="#12323c"/></svg>
<svg style="position:absolute;left:20.5px;top:188.16px;" width="8" height="7.3" viewBox="0 0 8 7.3"><path d="M0.9 0.5h3.2l1.4 1.4v4.9H0.9z" fill="#eaf0f8" stroke="#9fb0c8" stroke-width="0.6"/><path d="M1.8 2.6h2.6M1.8 3.7h2.6M1.8 4.8h2.6M1.8 5.9h1.6" stroke="#a9b9d2" stroke-width="0.5"/></svg>
<svg style="position:absolute;left:20.5px;top:198.98999999999998px;" width="8" height="7.3" viewBox="0 0 8 7.3"><path d="M0.9 0.5h3.2l1.4 1.4v4.9H0.9z" fill="#eaf0f8" stroke="#9fb0c8" stroke-width="0.6"/><path d="M1.8 2.6h2.6M1.8 3.7h2.6M1.8 4.8h2.6M1.8 5.9h1.6" stroke="#a9b9d2" stroke-width="0.5"/></svg>
<svg style="position:absolute;left:20.5px;top:209.82000000000002px;" width="8" height="7.3" viewBox="0 0 8 7.3"><path d="M0.9 0.5h3.2l1.4 1.4v4.9H0.9z" fill="#fbfbfb" stroke="#8a8f98" stroke-width="0.6"/><rect x="2" y="2.8" width="2.2" height="2.2" fill="#5f8fd8"/><path d="M1.8 5.8h2.6" stroke="#9aa6b8" stroke-width="0.5"/></svg>
<svg style="position:absolute;left:19.9px;top:221.15px;" width="8" height="7.3" viewBox="0 0 8 7.3"><path d="M0.4 6.2Q-0.2 3.2 2.4 2.7Q4 2.5 5 1.4Q6.2 0.1 7.6 0.6Q8.6 1.1 8.2 2.1Q7.8 2.9 6.9 2.5Q7.6 1.7 7 1.4Q6.4 1.4 6.3 2.3Q6.9 4.2 5.6 5.6L5.7 6.6H4.5L4.3 5.7Q3.4 5.9 2.7 5.7L2.6 6.6H1.3L1.2 5.9z" fill="#12323c"/></svg>
<svg style="position:absolute;left:162.2px;top:46.3px;" width="6" height="7.4" viewBox="0 0 5.6 7.4"><path d="M0.5 1.2Q0.5 0.5 1.2 0.5h2.4l1.5 1.5v4.3Q5.1 7 4.4 7H1.2Q0.5 7 0.5 6.3z" fill="#fffdf2" stroke="#c9b47a" stroke-width="0.6"/><path d="M3.4 1.9v3Q3.4 6 2.4 6Q1.7 6 1.5 5.4" stroke="#2a5db0" stroke-width="1.05" fill="none"/></svg>
<svg style="position:absolute;left:264.4px;top:48.199999999999996px;" width="4.4" height="4.4" viewBox="0 0 4.4 4.4"><path d="M0.2 0.2L4.2 4.2M4.2 0.2L0.2 4.2" stroke="#555" stroke-width="0.7" fill="none"/></svg>
<svg style="position:absolute;left:734px;top:45.9px;" width="5.2" height="2.4" viewBox="0 0 5.2 2.4"><rect x="0.35" y="0.35" width="4.5" height="1.7" fill="#ddd" stroke="#333" stroke-width="0.7"/><rect x="0.35" y="0.35" width="4.5" height="0.9" fill="#333"/></svg>
<svg style="position:absolute;left:744.9px;top:45.8px;" width="5.2" height="5.2" viewBox="0 0 5.2 5.2"><rect x="0.35" y="0.35" width="4.5" height="4.5" fill="#fff" stroke="#333" stroke-width="0.7"/><rect x="0.35" y="0.35" width="4.5" height="1.4" fill="#333"/></svg>
<svg style="position:absolute;left:175.7px;top:81.20999999999998px;" width="3.8" height="3.8" viewBox="0 0 3.8 3.8"><circle cx="1.9" cy="1.9" r="1.8" fill="#d0dcea"/><path d="M1.1 1.9h1.6M1.9 1.1v1.6" stroke="#1f2f4f" stroke-width="0.7"/></svg>
<svg style="position:absolute;left:175.7px;top:135.35999999999999px;" width="3.8" height="3.8" viewBox="0 0 3.8 3.8"><circle cx="1.9" cy="1.9" r="1.8" fill="#d6deea"/><path d="M1.1 1.9h1.6" stroke="#9aa8c0" stroke-width="0.6"/></svg>
<svg style="position:absolute;left:441.5px;top:80.4px;" width="5.2" height="7.3" viewBox="0 0 5.2 7.3"><rect x="0.3" y="0.3" width="4.6" height="7" fill="#fff" stroke="#9a9a9a" stroke-width="0.6"/></svg>
<svg style="position:absolute;left:741.0px;top:60.35px;" width="5" height="2.7" viewBox="0 0 5 2.7"><path d="M0.3 2.3L2.5 0.4L4.7 2.3" stroke="#858585" stroke-width="0.8" fill="none"/></svg>
<svg style="position:absolute;left:741.0px;top:287.84999999999997px;" width="5" height="2.7" viewBox="0 0 5 2.7"><path d="M0.3 0.4L2.5 2.3L4.7 0.4" stroke="#858585" stroke-width="0.8" fill="none"/></svg>
<svg style="position:absolute;left:182.70000000000002px;top:295.8px;" width="3.2" height="5.6" viewBox="0 0 2.7 5"><path d="M2.3 0.3L0.4 2.5L2.3 4.7" stroke="#858585" stroke-width="0.8" fill="none"/></svg>
<svg style="position:absolute;left:732.1px;top:295.8px;" width="3.2" height="5.6" viewBox="0 0 2.7 5"><path d="M0.4 0.3L2.3 2.5L0.4 4.7" stroke="#858585" stroke-width="0.8" fill="none"/></svg>
<svg style="position:absolute;left:747.7px;top:333.95px;" width="5" height="2.7" viewBox="0 0 5 2.7"><path d="M0.3 2.3L2.5 0.4L4.7 2.3" stroke="#858585" stroke-width="0.8" fill="none"/></svg>
<svg style="position:absolute;left:747.7px;top:374.84999999999997px;" width="5" height="2.7" viewBox="0 0 5 2.7"><path d="M0.3 0.4L2.5 2.3L4.7 0.4" stroke="#858585" stroke-width="0.8" fill="none"/></svg>
<svg style="position:absolute;left:2.9999999999999996px;top:383.7px;" width="3.2" height="5.6" viewBox="0 0 2.7 5"><path d="M2.3 0.3L0.4 2.5L2.3 4.7" stroke="#858585" stroke-width="0.8" fill="none"/></svg>
<svg style="position:absolute;left:738.1px;top:383.5px;" width="3.2" height="5.6" viewBox="0 0 2.7 5"><path d="M0.4 0.3L2.3 2.5L0.4 4.7" stroke="#858585" stroke-width="0.8" fill="none"/></svg>
<svg style="position:absolute;left:757px;top:43.5px;" width="7" height="1" viewBox="0 0 7 1"><rect x="0.0" y="0" width="0.8" height="0.8" fill="#b5b5b5"/><rect x="1.7" y="0" width="0.8" height="0.8" fill="#b5b5b5"/><rect x="3.4" y="0" width="0.8" height="0.8" fill="#b5b5b5"/><rect x="5.1" y="0" width="0.8" height="0.8" fill="#b5b5b5"/></svg>
<svg style="position:absolute;left:757.5px;top:47px;" width="6" height="5" viewBox="0 0 6 5"><path d="M1.6 1.2L5.6 0.6L4.6 3.6L0.6 4.2z" fill="#e6e6e6" stroke="#8a8a8a" stroke-width="0.6"/><path d="M2 2.2L5 1.7" stroke="#8a8a8a" stroke-width="0.5"/></svg>
<svg style="position:absolute;left:757px;top:57px;" width="7" height="7.5" viewBox="0 0 7 7.5"><rect x="0.4" y="0.4" width="2.4" height="2.4" fill="#fff" stroke="#2f6ec4" stroke-width="0.8"/><rect x="0.4" y="4.4" width="2.4" height="2.4" fill="#fff" stroke="#2f6ec4" stroke-width="0.8"/><path d="M3.6 1.6h3M3.6 5.6h3" stroke="#5f9ae0" stroke-width="0.9"/></svg>
<div style="position:absolute;left:756.6px;top:67px;width:8px;height:7.7px;background:#ff0000;"></div>
<svg style="position:absolute;left:757px;top:77px;" width="7" height="1" viewBox="0 0 7 1"><rect x="0.0" y="0" width="0.8" height="0.8" fill="#b5b5b5"/><rect x="1.7" y="0" width="0.8" height="0.8" fill="#b5b5b5"/><rect x="3.4" y="0" width="0.8" height="0.8" fill="#b5b5b5"/><rect x="5.1" y="0" width="0.8" height="0.8" fill="#b5b5b5"/></svg>
<svg style="position:absolute;left:757.5px;top:81.3px;" width="6" height="5" viewBox="0 0 6 5"><path d="M1.6 1.2L5.6 0.6L4.6 3.6L0.6 4.2z" fill="#e6e6e6" stroke="#8a8a8a" stroke-width="0.6"/><path d="M2 2.2L5 1.7" stroke="#8a8a8a" stroke-width="0.5"/></svg>
<svg style="position:absolute;left:757px;top:90.5px;" width="7.5" height="7.5" viewBox="0 0 7.5 7.5"><rect x="0.4" y="0.4" width="6.4" height="6.6" fill="#f3f6fb" stroke="#8a9ab5" stroke-width="0.6"/><circle cx="3.6" cy="2.6" r="1.3" fill="#d8352a"/><path d="M1.5 6.6Q3.6 3 5.7 6.6z" fill="#3f6fc2"/></svg>
<svg style="position:absolute;left:757px;top:100px;" width="7.5" height="7.5" viewBox="0 0 7.5 7.5"><rect x="0.4" y="0.4" width="6.4" height="6.4" fill="#fff" stroke="#5f7fae" stroke-width="0.7"/><path d="M0.4 2.4h6.4M2.6 0.4v6.4M4.7 0.4v6.4" stroke="#8aa4cf" stroke-width="0.5"/></svg>
<svg style="position:absolute;left:757px;top:109.7px;" width="7.5" height="7.5" viewBox="0 0 7.5 7.5"><path d="M1.4 1v5.4M3.7 1v5.4M6 1v5.4" stroke="#5a82b8" stroke-width="0.9"/><path d="M0.4 2.6h6.6" stroke="#6a8ac0" stroke-width="0.8"/><path d="M0.4 5h6.6" stroke="#d8a03a" stroke-width="1.2"/></svg>
<svg style="position:absolute;left:756.8px;top:120px;" width="8" height="8" viewBox="0 0 8 8"><rect x="0.3" y="0.6" width="7" height="6.6" fill="#4f9a3a"/><path d="M2.6 0.6v6.6M5 0.6v6.6" stroke="#e8d84a" stroke-width="0.8"/><path d="M0.3 2.8h7M0.3 5h7" stroke="#8ab0e0" stroke-width="0.6"/></svg>
<svg style="position:absolute;left:757px;top:130.7px;" width="7.5" height="7.5" viewBox="0 0 7.5 7.5"><rect x="0.4" y="0.4" width="5.6" height="6.6" fill="#f8fafd" stroke="#7f9ac4" stroke-width="0.6"/><path d="M1.5 2h2.6M1.5 3.4h2" stroke="#5f86c0" stroke-width="0.5"/><rect x="3" y="4.2" width="3.8" height="2.4" fill="#d8a03a"/></svg>
<svg style="position:absolute;left:757px;top:141.3px;" width="7.5" height="7.5" viewBox="0 0 7.5 7.5"><rect x="0.4" y="1" width="5.4" height="5.8" fill="#fff" stroke="#8a8a8a" stroke-width="0.6"/><rect x="2.6" y="3.6" width="4.4" height="3.2" fill="#3a7a3a"/><rect x="3.4" y="4.3" width="1.6" height="1.4" fill="#d8352a"/></svg>
<svg style="position:absolute;left:756.4px;top:151.6px;" width="8.4" height="7.3" viewBox="0 0 8 7"><path d="M0.4 6.2Q-0.2 3.2 2.4 2.7Q4 2.5 5 1.4Q6.2 0.1 7.6 0.6Q8.6 1.1 8.2 2.1Q7.8 2.9 6.9 2.5Q7.6 1.7 7 1.4Q6.4 1.4 6.3 2.3Q6.9 4.2 5.6 5.6L5.7 6.6H4.5L4.3 5.7Q3.4 5.9 2.7 5.7L2.6 6.6H1.3L1.2 5.9z" fill="#12323c"/></svg>
<svg style="position:absolute;left:756.4px;top:162.3px;" width="8.4" height="7.3" viewBox="0 0 8 7"><path d="M0.4 6.2Q-0.2 3.2 2.4 2.7Q4 2.5 5 1.4Q6.2 0.1 7.6 0.6Q8.6 1.1 8.2 2.1Q7.8 2.9 6.9 2.5Q7.6 1.7 7 1.4Q6.4 1.4 6.3 2.3Q6.9 4.2 5.6 5.6L5.7 6.6H4.5L4.3 5.7Q3.4 5.9 2.7 5.7L2.6 6.6H1.3L1.2 5.9z" fill="#12323c"/></svg>
<svg style="position:absolute;left:2.7px;top:310.2px;" width="6.5" height="6.5" viewBox="0 0 6.5 6.5"><rect x="0.5" y="0.5" width="5.2" height="4.4" rx="0.6" fill="#e9effb" stroke="#2f55a8" stroke-width="1"/><rect x="1.9" y="1.9" width="2.4" height="1.4" fill="#c9d6f0"/><rect x="1.6" y="5.3" width="3" height="0.8" fill="#2f55a8"/></svg>
<svg style="position:absolute;left:40.1px;top:311.15px;" width="4.5" height="4.5" viewBox="0 0 4.5 4.5"><path d="M0.2 0.2L4.3 4.3M4.3 0.2L0.2 4.3" stroke="#555" stroke-width="0.7" fill="none"/></svg>
<div style="position:absolute;left:0.95px;top:330.7px;width:0.6px;height:10px;background:#444;"></div>
<svg style="position:absolute;left:646.75px;top:308.45px;" width="7.5" height="7.5" viewBox="0 0 7.5 7.5"><rect x="0.6" y="0.6" width="4.6" height="5.6" fill="#e6e6e6" stroke="#bdbdbd" stroke-width="0.6"/><path d="M3.6 3.6L7 7M7 3.6L3.6 7" stroke="#a9a9a9" stroke-width="0.9"/></svg>
<svg style="position:absolute;left:657.25px;top:308.45px;" width="7.5" height="7.5" viewBox="0 0 7.5 7.5"><rect x="0.4" y="0.4" width="6.7" height="6.7" fill="#dbe8f8" stroke="#8aa6cc" stroke-width="0.6"/><rect x="1" y="3.2" width="3.4" height="3" fill="#e8b84a" stroke="#b98a2e" stroke-width="0.4"/><path d="M1.8 3.2V2.2Q2.7 1.2 3.6 2.2V3.2" stroke="#b98a2e" stroke-width="0.6" fill="none"/><rect x="5.2" y="1" width="1.2" height="5.4" fill="#7a9ad0"/></svg>
<svg style="position:absolute;left:667.75px;top:308.45px;" width="7.5" height="7.5" viewBox="0 0 7.5 7.5"><rect x="0.4" y="0.4" width="6" height="6.4" fill="#e4ecf8" stroke="#9ab0d0" stroke-width="0.6"/><path d="M2.5 4.6l2-2.6 2 1.6-2 2.8z" fill="#e8b84a" stroke="#b98a2e" stroke-width="0.4"/><path d="M1.4 2h2M1.4 3.2h1.4" stroke="#8aa0c8" stroke-width="0.5"/></svg>
<div style="position:absolute;left:678.8px;top:308px;width:0.8px;height:8.6px;background:#bdbdbd;"></div>
<svg style="position:absolute;left:682.25px;top:308.45px;" width="7.5" height="7.5" viewBox="0 0 7.5 7.5"><rect x="0.4" y="2.4" width="6.2" height="4.6" fill="#fdfdfd" stroke="#4f74ae" stroke-width="0.6"/><rect x="0.4" y="2.4" width="6.2" height="1.2" fill="#5a82be"/><path d="M3 3.4L6.6 1M4.8 0.4h2.4v2.2z" stroke="#2f9a45" stroke-width="0.9" fill="#2f9a45"/></svg>
<svg style="position:absolute;left:694.25px;top:308.45px;" width="7.5" height="7.5" viewBox="0 0 7.5 7.5"><rect x="0.6" y="0.6" width="5.8" height="5" rx="0.6" fill="#f3f3f3" stroke="#7a7a7a" stroke-width="0.7"/><rect x="2" y="2" width="3" height="2" fill="#c9c9c9"/><rect x="2.4" y="6" width="2.4" height="0.8" fill="#7a7a7a"/></svg>
<svg style="position:absolute;left:704.8px;top:311.5px;" width="4.4" height="2.4" viewBox="0 0 4.4 2.4"><path d="M0 0H4.4L2.2 2.4Z" fill="#5a5a5a"/></svg>
<svg style="position:absolute;left:713.25px;top:308.45px;" width="7.5" height="7.5" viewBox="0 0 7.5 7.5"><rect x="0.4" y="1.4" width="6" height="5.6" fill="#fffbe8" stroke="#6f8fc0" stroke-width="0.6"/><rect x="0.4" y="1.4" width="6" height="1.2" fill="#4a78b8"/><path d="M6 0l.6 1.2 1.2.3-1 .8.2 1.2L6 2.9l-1 .6.2-1.2-1-.8 1.2-.3z" fill="#e8b83a"/></svg>
<svg style="position:absolute;left:724.8px;top:311.5px;" width="4.4" height="2.4" viewBox="0 0 4.4 2.4"><path d="M0 0H4.4L2.2 2.4Z" fill="#111"/></svg>
<svg style="position:absolute;left:734px;top:309.59999999999997px;" width="5.2" height="2.4" viewBox="0 0 5.2 2.4"><rect x="0.35" y="0.35" width="4.5" height="1.7" fill="#ddd" stroke="#333" stroke-width="0.7"/><rect x="0.35" y="0.35" width="4.5" height="0.9" fill="#333"/></svg>
<svg style="position:absolute;left:744.4px;top:309.5px;" width="5.2" height="5.2" viewBox="0 0 5.2 5.2"><rect x="0.35" y="0.35" width="4.5" height="4.5" fill="#fff" stroke="#333" stroke-width="0.7"/><rect x="0.35" y="0.35" width="4.5" height="1.4" fill="#333"/></svg>
<svg style="position:absolute;left:584.1px;top:395px;" width="1" height="8" viewBox="0 0 1 8"><rect x="0" y="0.0" width="0.8" height="0.8" fill="#b5ad9f"/><rect x="0" y="2.0" width="0.8" height="0.8" fill="#b5ad9f"/><rect x="0" y="4.0" width="0.8" height="0.8" fill="#b5ad9f"/><rect x="0" y="6.0" width="0.8" height="0.8" fill="#b5ad9f"/></svg>
<svg style="position:absolute;left:753.6px;top:395px;" width="1" height="8" viewBox="0 0 1 8"><rect x="0" y="0.0" width="0.8" height="0.8" fill="#b5ad9f"/><rect x="0" y="2.0" width="0.8" height="0.8" fill="#b5ad9f"/><rect x="0" y="4.0" width="0.8" height="0.8" fill="#b5ad9f"/><rect x="0" y="6.0" width="0.8" height="0.8" fill="#b5ad9f"/></svg>
<svg style="position:absolute;left:757.7px;top:394.4px;" width="6" height="8" viewBox="0 0 6 8"><path d="M3 0.5Q5.4 0.5 5.4 2.9Q5.4 4.1 4.3 5.1V5.8H1.7V5.1Q0.6 4.1 0.6 2.9Q0.6 0.5 3 0.5z" fill="#fdeeb0" stroke="#f0b040" stroke-width="0.7"/><rect x="1.9" y="5.9" width="2.2" height="1.9" rx="0.5" fill="#2f3f5f"/><circle cx="3" cy="6.7" r="0.45" fill="#e8eef8"/></svg>
<div style="position:absolute;left:0;top:0;width:766px;height:404px;will-change:opacity">
<span style='position:absolute;left:0;top:0;line-height:12px;height:12px;font-family:"Liberation Sans", sans-serif;font-size:7.3px;color:#0a0a0a;white-space:pre;transform-origin:0 0;transform:matrix(1,0.0005,0,1,16.00,3.50);letter-spacing:-0.090px;'>eclipse-workspace - cardatabase/src/main/java/com/packt/cardatabase/CardatabaseApplication.java - Eclipse IDE</span>
<span style='position:absolute;left:0;top:0;line-height:12px;height:12px;font-family:"Liberation Sans", sans-serif;font-size:7.3px;color:#1a1a1a;white-space:pre;transform-origin:0 0;transform:matrix(1,0.0005,0,1,3.00,17.50);letter-spacing:-0.245px;'><span style="position:relative">F<i style="position:absolute;left:0;right:0.1px;top:7.1px;height:0.6px;background:#444"></i></span>ile</span>
<span style='position:absolute;left:0;top:0;line-height:12px;height:12px;font-family:"Liberation Sans", sans-serif;font-size:7.3px;color:#1a1a1a;white-space:pre;transform-origin:0 0;transform:matrix(1,0.0005,0,1,20.50,17.50);letter-spacing:-0.123px;'><span style="position:relative">E<i style="position:absolute;left:0;right:0.1px;top:7.1px;height:0.6px;background:#444"></i></span>dit</span>
<span style='position:absolute;left:0;top:0;line-height:12px;height:12px;font-family:"Liberation Sans", sans-serif;font-size:7.3px;color:#1a1a1a;white-space:pre;transform-origin:0 0;transform:matrix(1,0.0005,0,1,39.30,17.50);letter-spacing:-0.373px;'><span style="position:relative">S<i style="position:absolute;left:0;right:0.1px;top:7.1px;height:0.6px;background:#444"></i></span>ource</span>
<span style='position:absolute;left:0;top:0;line-height:12px;height:12px;font-family:"Liberation Sans", sans-serif;font-size:7.3px;color:#1a1a1a;white-space:pre;transform-origin:0 0;transform:matrix(1,0.0005,0,1,67.20,17.50);letter-spacing:-0.162px;'>Refac<span style="position:relative">t<i style="position:absolute;left:0;right:0.1px;top:7.1px;height:0.6px;background:#444"></i></span>or</span>
<span style='position:absolute;left:0;top:0;line-height:12px;height:12px;font-family:"Liberation Sans", sans-serif;font-size:7.3px;color:#1a1a1a;white-space:pre;transform-origin:0 0;transform:matrix(1,0.0005,0,1,100.30,17.50);letter-spacing:-0.102px;'><span style="position:relative">N<i style="position:absolute;left:0;right:0.1px;top:7.1px;height:0.6px;background:#444"></i></span>avigate</span>
<span style='position:absolute;left:0;top:0;line-height:12px;height:12px;font-family:"Liberation Sans", sans-serif;font-size:7.3px;color:#1a1a1a;white-space:pre;transform-origin:0 0;transform:matrix(1,0.0005,0,1,135.30,17.50);letter-spacing:-0.390px;'>Se<span style="position:relative">a<i style="position:absolute;left:0;right:0.1px;top:7.1px;height:0.6px;background:#444"></i></span>rch</span>
<span style='position:absolute;left:0;top:0;line-height:12px;height:12px;font-family:"Liberation Sans", sans-serif;font-size:7.3px;color:#1a1a1a;white-space:pre;transform-origin:0 0;transform:matrix(1,0.0005,0,1,162.90,17.50);letter-spacing:-0.203px;'><span style="position:relative">P<i style="position:absolute;left:0;right:0.1px;top:7.1px;height:0.6px;background:#444"></i></span>roject</span>
<span style='position:absolute;left:0;top:0;line-height:12px;height:12px;font-family:"Liberation Sans", sans-serif;font-size:7.3px;color:#1a1a1a;white-space:pre;transform-origin:0 0;transform:matrix(1,0.0005,0,1,190.60,17.50);letter-spacing:-0.502px;'><span style="position:relative">R<i style="position:absolute;left:0;right:0.1px;top:7.1px;height:0.6px;background:#444"></i></span>un</span>
<span style='position:absolute;left:0;top:0;line-height:12px;height:12px;font-family:"Liberation Sans", sans-serif;font-size:7.3px;color:#1a1a1a;white-space:pre;transform-origin:0 0;transform:matrix(1,0.0005,0,1,209.50,17.50);letter-spacing:-0.078px;'><span style="position:relative">W<i style="position:absolute;left:0;right:0.1px;top:7.1px;height:0.6px;background:#444"></i></span>indow</span>
<span style='position:absolute;left:0;top:0;line-height:12px;height:12px;font-family:"Liberation Sans", sans-serif;font-size:7.3px;color:#1a1a1a;white-space:pre;transform-origin:0 0;transform:matrix(1,0.0005,0,1,242.00,17.50);letter-spacing:-0.008px;'><span style="position:relative">H<i style="position:absolute;left:0;right:0.1px;top:7.1px;height:0.6px;background:#444"></i></span>elp</span>
<span style='position:absolute;left:0;top:0;line-height:12px;height:12px;font-family:"Liberation Sans", sans-serif;font-size:7.3px;color:#111;white-space:pre;transform-origin:0 0;transform:matrix(1,0.0005,0,1,11.30,44.50);letter-spacing:-0.164px;'>Project Explorer</span>
<span style='position:absolute;left:0;top:0;line-height:12px;height:12px;font-family:"Liberation Sans", sans-serif;font-size:7.3px;color:#161616;white-space:pre;transform-origin:0 0;transform:matrix(1,0.0005,0,1,20.70,56.50);letter-spacing:-0.216px;'>cardatabase</span>
<span style='position:absolute;left:0;top:0;line-height:12px;height:12px;font-family:"Liberation Sans", sans-serif;font-size:7.3px;color:#161616;white-space:pre;transform-origin:0 0;transform:matrix(1,0.0005,0,1,30.15,67.25);letter-spacing:-0.049px;'>src/main/java</span>
<span style='position:absolute;left:0;top:0;line-height:12px;height:12px;font-family:"Liberation Sans", sans-serif;font-size:7.3px;color:#161616;white-space:pre;transform-origin:0 0;transform:matrix(1,0.0005,0,1,39.60,78.25);letter-spacing:-0.193px;'>com.packt.cardatabase</span>
<span style='position:absolute;left:0;top:0;line-height:12px;height:12px;font-family:"Liberation Sans", sans-serif;font-size:7.3px;color:#161616;white-space:pre;transform-origin:0 0;transform:matrix(1,0.0005,0,1,49.30,89.00);letter-spacing:-0.134px;'>CardatabaseApplication.java</span>
<span style='position:absolute;left:0;top:0;line-height:12px;height:12px;font-family:"Liberation Sans", sans-serif;font-size:7.3px;color:#161616;white-space:pre;transform-origin:0 0;transform:matrix(1,0.0005,0,1,30.15,99.75);letter-spacing:-0.155px;'>src/main/resources</span>
<span style='position:absolute;left:0;top:0;line-height:12px;height:12px;font-family:"Liberation Sans", sans-serif;font-size:7.3px;color:#161616;white-space:pre;transform-origin:0 0;transform:matrix(1,0.0005,0,1,30.15,110.75);letter-spacing:-0.068px;'>src/test/java</span>
<span style='position:absolute;left:0;top:0;line-height:12px;height:12px;font-family:"Liberation Sans", sans-serif;font-size:7.3px;color:#161616;white-space:pre;transform-origin:0 0;transform:matrix(1,0.0005,0,1,30.15,121.50);letter-spacing:-0.385px;'>JRE System Library</span>
<span style='position:absolute;left:0;top:0;line-height:12px;height:12px;font-family:"Liberation Sans", sans-serif;font-size:7.3px;color:#a89a5a;white-space:pre;transform-origin:0 0;transform:matrix(1,0.0005,0,1,89.80,121.50);letter-spacing:-0.432px;'>[JavaSE-17]</span>
<span style='position:absolute;left:0;top:0;line-height:12px;height:12px;font-family:"Liberation Sans", sans-serif;font-size:7.3px;color:#161616;white-space:pre;transform-origin:0 0;transform:matrix(1,0.0005,0,1,30.15,132.25);letter-spacing:-0.174px;'>Project and External Dependencies</span>
<span style='position:absolute;left:0;top:0;line-height:12px;height:12px;font-family:"Liberation Sans", sans-serif;font-size:7.3px;color:#161616;white-space:pre;transform-origin:0 0;transform:matrix(1,0.0005,0,1,30.15,143.25);letter-spacing:0.133px;'>bin</span>
<span style='position:absolute;left:0;top:0;line-height:12px;height:12px;font-family:"Liberation Sans", sans-serif;font-size:7.3px;color:#161616;white-space:pre;transform-origin:0 0;transform:matrix(1,0.0005,0,1,30.15,154.00);letter-spacing:-0.008px;'>gradle</span>
<span style='position:absolute;left:0;top:0;line-height:12px;height:12px;font-family:"Liberation Sans", sans-serif;font-size:7.3px;color:#161616;white-space:pre;transform-origin:0 0;transform:matrix(1,0.0005,0,1,30.15,164.75);letter-spacing:-0.395px;'>src</span>
<span style='position:absolute;left:0;top:0;line-height:12px;height:12px;font-family:"Liberation Sans", sans-serif;font-size:7.3px;color:#161616;white-space:pre;transform-origin:0 0;transform:matrix(1,0.0005,0,1,30.15,175.75);letter-spacing:-0.007px;'>build.gradle</span>
<span style='position:absolute;left:0;top:0;line-height:12px;height:12px;font-family:"Liberation Sans", sans-serif;font-size:7.3px;color:#161616;white-space:pre;transform-origin:0 0;transform:matrix(1,0.0005,0,1,30.15,186.50);letter-spacing:0.055px;'>gradlew</span>
<span style='position:absolute;left:0;top:0;line-height:12px;height:12px;font-family:"Liberation Sans", sans-serif;font-size:7.3px;color:#161616;white-space:pre;transform-origin:0 0;transform:matrix(1,0.0005,0,1,30.15,197.25);letter-spacing:0.029px;'>gradlew.bat</span>
<span style='position:absolute;left:0;top:0;line-height:12px;height:12px;font-family:"Liberation Sans", sans-serif;font-size:7.3px;color:#161616;white-space:pre;transform-origin:0 0;transform:matrix(1,0.0005,0,1,30.15,208.00);letter-spacing:-0.350px;'>HELP.md</span>
<span style='position:absolute;left:0;top:0;line-height:12px;height:12px;font-family:"Liberation Sans", sans-serif;font-size:7.3px;color:#161616;white-space:pre;transform-origin:0 0;transform:matrix(1,0.0005,0,1,30.15,219.00);letter-spacing:-0.128px;'>settings.gradle</span>
<span style='position:absolute;left:0;top:0;line-height:12px;height:12px;font-family:"Liberation Sans", sans-serif;font-size:7.3px;color:#111;white-space:pre;transform-origin:0 0;transform:matrix(1,0.0005,0,1,170.40,44.50);letter-spacing:-0.126px;'>CardatabaseApplication.java</span>
<span style='position:absolute;left:0;top:0;line-height:12px;height:12px;font-family:"Liberation Mono", monospace;font-size:9.1px;color:#5c5c5c;white-space:pre;transform-origin:0 0;transform:matrix(1,0.0005,0,1,171.01,56.75);letter-spacing:-0.279px;'>1</span>
<span style='position:absolute;left:0;top:0;line-height:12px;height:12px;font-family:"Liberation Mono", monospace;font-size:9.1px;color:#7f0055;white-space:pre;transform-origin:0 0;transform:matrix(1,0.0005,0,1,181.20,56.75);font-weight:bold;letter-spacing:-0.268px;'>package</span>
<span style='position:absolute;left:0;top:0;line-height:12px;height:12px;font-family:"Liberation Mono", monospace;font-size:9.1px;color:#000;white-space:pre;transform-origin:0 0;transform:matrix(1,0.0005,0,1,217.53,56.75);letter-spacing:-0.267px;-webkit-text-stroke:0.18px;'> com.packt.cardatabase;</span>
<span style='position:absolute;left:0;top:0;line-height:12px;height:12px;font-family:"Liberation Mono", monospace;font-size:9.1px;color:#5c5c5c;white-space:pre;transform-origin:0 0;transform:matrix(1,0.0005,0,1,171.01,67.75);letter-spacing:-0.279px;'>2</span>
<span style='position:absolute;left:0;top:0;line-height:12px;height:12px;font-family:"Liberation Mono", monospace;font-size:9.1px;color:#5c5c5c;white-space:pre;transform-origin:0 0;transform:matrix(1,0.0005,0,1,171.01,78.50);letter-spacing:-0.279px;'>3</span>
<span style='position:absolute;left:0;top:0;line-height:12px;height:12px;font-family:"Liberation Mono", monospace;font-size:9.1px;color:#7f0055;white-space:pre;transform-origin:0 0;transform:matrix(1,0.0005,0,1,181.20,78.50);font-weight:bold;letter-spacing:-0.268px;'>import</span>
<span style='position:absolute;left:0;top:0;line-height:12px;height:12px;font-family:"Liberation Mono", monospace;font-size:9.1px;color:#000;white-space:pre;transform-origin:0 0;transform:matrix(1,0.0005,0,1,212.34,78.50);letter-spacing:-0.267px;-webkit-text-stroke:0.18px;'> org.springframework.boot.SpringApplication;</span>
<span style='position:absolute;left:0;top:0;line-height:12px;height:12px;font-family:"Liberation Mono", monospace;font-size:9.1px;color:#5c5c5c;white-space:pre;transform-origin:0 0;transform:matrix(1,0.0005,0,1,171.01,89.25);letter-spacing:-0.279px;'>5</span>
<span style='position:absolute;left:0;top:0;line-height:12px;height:12px;font-family:"Liberation Mono", monospace;font-size:9.1px;color:#5c5c5c;white-space:pre;transform-origin:0 0;transform:matrix(1,0.0005,0,1,171.01,100.25);letter-spacing:-0.279px;'>6</span>
<span style='position:absolute;left:0;top:0;line-height:12px;height:12px;font-family:"Liberation Mono", monospace;font-size:9.1px;color:#646464;white-space:pre;transform-origin:0 0;transform:matrix(1,0.0005,0,1,181.20,100.25);letter-spacing:-0.267px;-webkit-text-stroke:0.18px;'>@SpringBootApplication</span>
<span style='position:absolute;left:0;top:0;line-height:12px;height:12px;font-family:"Liberation Mono", monospace;font-size:9.1px;color:#5c5c5c;white-space:pre;transform-origin:0 0;transform:matrix(1,0.0005,0,1,171.01,111.00);letter-spacing:-0.279px;'>7</span>
<span style='position:absolute;left:0;top:0;line-height:12px;height:12px;font-family:"Liberation Mono", monospace;font-size:9.1px;color:#7f0055;white-space:pre;transform-origin:0 0;transform:matrix(1,0.0005,0,1,181.20,111.00);font-weight:bold;letter-spacing:-0.268px;'>public</span>
<span style='position:absolute;left:0;top:0;line-height:12px;height:12px;font-family:"Liberation Mono", monospace;font-size:9.1px;color:#7f0055;white-space:pre;transform-origin:0 0;transform:matrix(1,0.0005,0,1,217.53,111.00);font-weight:bold;letter-spacing:-0.269px;'>class</span>
<span style='position:absolute;left:0;top:0;line-height:12px;height:12px;font-family:"Liberation Mono", monospace;font-size:9.1px;color:#000;white-space:pre;transform-origin:0 0;transform:matrix(1,0.0005,0,1,243.48,111.00);letter-spacing:-0.268px;-webkit-text-stroke:0.18px;'> CardatabaseApplication {</span>
<span style='position:absolute;left:0;top:0;line-height:12px;height:12px;font-family:"Liberation Mono", monospace;font-size:9.1px;color:#5c5c5c;white-space:pre;transform-origin:0 0;transform:matrix(1,0.0005,0,1,171.01,121.75);letter-spacing:-0.279px;'>8</span>
<span style='position:absolute;left:0;top:0;line-height:12px;height:12px;font-family:"Liberation Mono", monospace;font-size:9.1px;color:#5c5c5c;white-space:pre;transform-origin:0 0;transform:matrix(1,0.0005,0,1,171.01,132.75);letter-spacing:-0.279px;'>9</span>
<span style='position:absolute;left:0;top:0;line-height:12px;height:12px;font-family:"Liberation Mono", monospace;font-size:9.1px;color:#7f0055;white-space:pre;transform-origin:0 0;transform:matrix(1,0.0005,0,1,201.96,132.75);font-weight:bold;letter-spacing:-0.268px;'>public</span>
<span style='position:absolute;left:0;top:0;line-height:12px;height:12px;font-family:"Liberation Mono", monospace;font-size:9.1px;color:#7f0055;white-space:pre;transform-origin:0 0;transform:matrix(1,0.0005,0,1,238.29,132.75);font-weight:bold;letter-spacing:-0.268px;'>static</span>
<span style='position:absolute;left:0;top:0;line-height:12px;height:12px;font-family:"Liberation Mono", monospace;font-size:9.1px;color:#7f0055;white-space:pre;transform-origin:0 0;transform:matrix(1,0.0005,0,1,274.62,132.75);font-weight:bold;letter-spacing:-0.271px;'>void</span>
<span style='position:absolute;left:0;top:0;line-height:12px;height:12px;font-family:"Liberation Mono", monospace;font-size:9.1px;color:#000;white-space:pre;transform-origin:0 0;transform:matrix(1,0.0005,0,1,295.38,132.75);letter-spacing:-0.267px;-webkit-text-stroke:0.18px;'> main(String[] </span>
<span style='position:absolute;left:0;top:0;line-height:12px;height:12px;font-family:"Liberation Mono", monospace;font-size:9.1px;color:#6a3e3e;white-space:pre;transform-origin:0 0;transform:matrix(1,0.0005,0,1,373.23,132.75);letter-spacing:-0.271px;-webkit-text-stroke:0.18px;'>args</span>
<span style='position:absolute;left:0;top:0;line-height:12px;height:12px;font-family:"Liberation Mono", monospace;font-size:9.1px;color:#000;white-space:pre;transform-origin:0 0;transform:matrix(1,0.0005,0,1,393.99,132.75);letter-spacing:-0.268px;-webkit-text-stroke:0.18px;'>) {</span>
<span style='position:absolute;left:0;top:0;line-height:12px;height:12px;font-family:"Liberation Mono", monospace;font-size:9.1px;color:#5c5c5c;white-space:pre;transform-origin:0 0;transform:matrix(1,0.0005,0,1,165.82,143.50);letter-spacing:-0.271px;'>10</span>
<span style='position:absolute;left:0;top:0;line-height:12px;height:12px;font-family:"Liberation Mono", monospace;font-size:9.1px;color:#000;white-space:pre;transform-origin:0 0;transform:matrix(1,0.0005,0,1,181.20,143.50);letter-spacing:-0.267px;-webkit-text-stroke:0.18px;'>        SpringApplication.</span>
<span style='position:absolute;left:0;top:0;line-height:12px;height:12px;font-family:"Liberation Mono", monospace;font-size:9.1px;color:#000;white-space:pre;transform-origin:0 0;transform:matrix(1,0.0005,0,1,316.14,143.50);font-style:italic;letter-spacing:-0.268px;-webkit-text-stroke:0.18px;'>run</span>
<span style='position:absolute;left:0;top:0;line-height:12px;height:12px;font-family:"Liberation Mono", monospace;font-size:9.1px;color:#000;white-space:pre;transform-origin:0 0;transform:matrix(1,0.0005,0,1,331.71,143.50);letter-spacing:-0.268px;-webkit-text-stroke:0.18px;'>(CardatabaseApplication.</span>
<span style='position:absolute;left:0;top:0;line-height:12px;height:12px;font-family:"Liberation Mono", monospace;font-size:9.1px;color:#7f0055;white-space:pre;transform-origin:0 0;transform:matrix(1,0.0005,0,1,456.27,143.50);font-weight:bold;letter-spacing:-0.269px;'>class</span>
<span style='position:absolute;left:0;top:0;line-height:12px;height:12px;font-family:"Liberation Mono", monospace;font-size:9.1px;color:#000;white-space:pre;transform-origin:0 0;transform:matrix(1,0.0005,0,1,482.22,143.50);letter-spacing:-0.271px;-webkit-text-stroke:0.18px;'>, </span>
<span style='position:absolute;left:0;top:0;line-height:12px;height:12px;font-family:"Liberation Mono", monospace;font-size:9.1px;color:#6a3e3e;white-space:pre;transform-origin:0 0;transform:matrix(1,0.0005,0,1,492.60,143.50);letter-spacing:-0.271px;-webkit-text-stroke:0.18px;'>args</span>
<span style='position:absolute;left:0;top:0;line-height:12px;height:12px;font-family:"Liberation Mono", monospace;font-size:9.1px;color:#000;white-space:pre;transform-origin:0 0;transform:matrix(1,0.0005,0,1,513.36,143.50);letter-spacing:-0.271px;-webkit-text-stroke:0.18px;'>);</span>
<span style='position:absolute;left:0;top:0;line-height:12px;height:12px;font-family:"Liberation Mono", monospace;font-size:9.1px;color:#5c5c5c;white-space:pre;transform-origin:0 0;transform:matrix(1,0.0005,0,1,165.82,154.25);letter-spacing:-0.271px;'>11</span>
<span style='position:absolute;left:0;top:0;line-height:12px;height:12px;font-family:"Liberation Mono", monospace;font-size:9.1px;color:#000;white-space:pre;transform-origin:0 0;transform:matrix(1,0.0005,0,1,181.20,154.25);letter-spacing:-0.269px;-webkit-text-stroke:0.18px;'>    }</span>
<span style='position:absolute;left:0;top:0;line-height:12px;height:12px;font-family:"Liberation Mono", monospace;font-size:9.1px;color:#5c5c5c;white-space:pre;transform-origin:0 0;transform:matrix(1,0.0005,0,1,165.82,165.25);letter-spacing:-0.271px;'>12</span>
<span style='position:absolute;left:0;top:0;line-height:12px;height:12px;font-family:"Liberation Mono", monospace;font-size:9.1px;color:#5c5c5c;white-space:pre;transform-origin:0 0;transform:matrix(1,0.0005,0,1,165.82,176.00);letter-spacing:-0.271px;'>13</span>
<span style='position:absolute;left:0;top:0;line-height:12px;height:12px;font-family:"Liberation Mono", monospace;font-size:9.1px;color:#000;white-space:pre;transform-origin:0 0;transform:matrix(1,0.0005,0,1,181.20,176.00);letter-spacing:-0.279px;-webkit-text-stroke:0.18px;'>}</span>
<span style='position:absolute;left:0;top:0;line-height:12px;height:12px;font-family:"Liberation Mono", monospace;font-size:9.1px;color:#5c5c5c;white-space:pre;transform-origin:0 0;transform:matrix(1,0.0005,0,1,165.82,186.75);letter-spacing:-0.271px;'>14</span>
<span style='position:absolute;left:0;top:0;line-height:12px;height:12px;font-family:"Liberation Sans", sans-serif;font-size:7.3px;color:#111;white-space:pre;transform-origin:0 0;transform:matrix(1,0.0005,0,1,11.30,308.25);letter-spacing:-0.340px;'>Console</span>
<span style='position:absolute;left:0;top:0;line-height:12px;height:12px;font-family:"Liberation Sans", sans-serif;font-size:7.3px;color:#111;white-space:pre;transform-origin:0 0;transform:matrix(1,0.0005,0,1,0.60,319.25);letter-spacing:-0.152px;'>[Gradle Operations]</span>
</div>
</body></html>
